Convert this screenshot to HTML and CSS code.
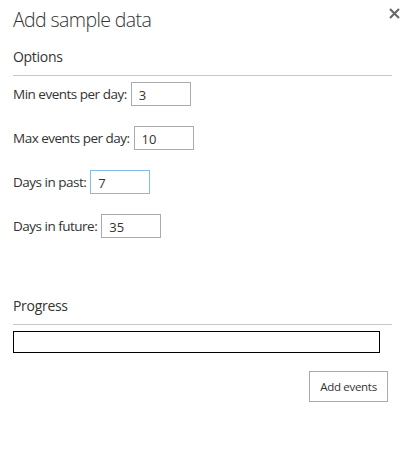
FILE: index.html
```html
<!DOCTYPE html>
<html>
<head>
<meta charset="utf-8">
<link rel="stylesheet" href="styles.css">
</head>
<body>
<div class="panel">
  <button class="close" aria-label="Close">
    <svg width="11" height="11" viewBox="0 0 11 11"><path d="M1 1L10 10M10 1L1 10" stroke="#666" stroke-width="2"/></svg>
  </button>
  <h1 class="title">Add sample data</h1>
  <section class="section">
    <h2 class="section-title">Options</h2>
    <div class="fields">
      <label class="row"><span class="label">Min events per day:</span><input class="num" value="3"></label>
      <label class="row"><span class="label">Max events per day:</span><input class="num" value="10"></label>
      <label class="row"><span class="label">Days in past:</span><input class="num focus" value="7"></label>
      <label class="row"><span class="label">Days in future:</span><input class="num" value="35"></label>
    </div>
  </section>
  <section class="section progress-section">
    <h2 class="section-title">Progress</h2>
    <div class="progress"></div>
  </section>
  <div class="actions">
    <button class="btn">Add events</button>
  </div>
</div>
</body>
</html>
```
FILE: styles.css
```css
html, body {
  margin: 0;
  padding: 0;
  background: #fff;
}
body {
  font-family: "Open Sans", "Noto Sans", sans-serif;
  color: #333;
}
.panel {
  position: relative;
  padding: 6px 18px 0 13px;
  width: 379px;
}
.close {
  position: absolute;
  top: 8px;
  left: 389px;
  width: 11px;
  height: 11px;
  padding: 0;
  border: 0;
  background: none;
  line-height: 0;
}
.title {
  margin: 0;
  font-size: 19.5px;
  font-weight: 300;
  letter-spacing: -0.6px;
  line-height: 28px;
  color: #333;
}
.section-title {
  margin: 0;
  font-size: 14px;
  font-weight: 400;
  letter-spacing: -0.3px;
  line-height: 20px;
  padding-bottom: 8px;
  border-bottom: 1px solid #c8c8c8;
}
.section {
  margin-top: 13px;
}
.fields {
  display: flex;
  flex-direction: column;
  gap: 20px;
  padding-top: 6px;
}
.row {
  display: flex;
  align-items: center;
  gap: 4px;
}
.label {
  font-size: 13.5px;
  letter-spacing: -0.5px;
  color: #333;
}
.num {
  box-sizing: border-box;
  width: 60px;
  height: 24px;
  border: 1px solid #ababab;
  padding: 2px 7px 0;
  font-family: inherit;
  font-size: 13px;
  color: #333;
  outline: none;
  margin: 0;
}
.num.focus {
  border-color: #7fbde6;
}
.progress-section {
  margin-top: 58px;
}
.progress {
  box-sizing: border-box;
  margin-top: 6px;
  width: 367px;
  height: 22px;
  border: 1px solid #000;
}
.actions {
  display: flex;
  justify-content: flex-end;
  margin-top: 18px;
  width: 375px;
}
.btn {
  box-sizing: border-box;
  width: 79px;
  height: 31px;
  border: 1px solid #ababab;
  background: #fff;
  font-family: inherit;
  font-size: 11.5px;
  letter-spacing: -0.3px;
  color: #333;
  padding: 0;
  margin: 0;
}
```
